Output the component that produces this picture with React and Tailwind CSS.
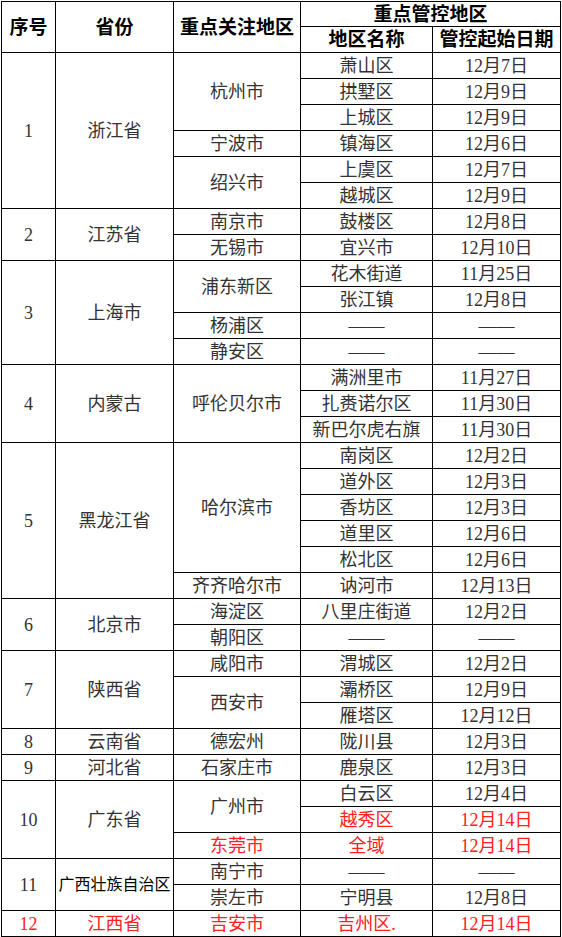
import React from "react";

const font = { fontFamily: '"Liberation Serif", "Noto Sans CJK SC", serif' };

const rows = [
  // [no, province, provSpan, city, citySpan, area, date, redArea, redCity]
  { no: "1", prov: "浙江省", ps: 6, city: "杭州市", cs: 3, area: "萧山区", date: "12月7日" },
  { area: "拱墅区", date: "12月9日" },
  { area: "上城区", date: "12月9日" },
  { city: "宁波市", cs: 1, area: "镇海区", date: "12月6日" },
  { city: "绍兴市", cs: 2, area: "上虞区", date: "12月7日" },
  { area: "越城区", date: "12月9日" },
  { no: "2", prov: "江苏省", ps: 2, city: "南京市", cs: 1, area: "鼓楼区", date: "12月8日" },
  { city: "无锡市", cs: 1, area: "宜兴市", date: "12月10日" },
  { no: "3", prov: "上海市", ps: 4, city: "浦东新区", cs: 2, area: "花木街道", date: "11月25日" },
  { area: "张江镇", date: "12月8日" },
  { city: "杨浦区", cs: 1, area: "——", date: "——" },
  { city: "静安区", cs: 1, area: "——", date: "——" },
  { no: "4", prov: "内蒙古", ps: 3, city: "呼伦贝尔市", cs: 3, area: "满洲里市", date: "11月27日" },
  { area: "扎赉诺尔区", date: "11月30日" },
  { area: "新巴尔虎右旗", date: "11月30日" },
  { no: "5", prov: "黑龙江省", ps: 6, city: "哈尔滨市", cs: 5, area: "南岗区", date: "12月2日" },
  { area: "道外区", date: "12月3日" },
  { area: "香坊区", date: "12月3日" },
  { area: "道里区", date: "12月6日" },
  { area: "松北区", date: "12月6日" },
  { city: "齐齐哈尔市", cs: 1, area: "讷河市", date: "12月13日" },
  { no: "6", prov: "北京市", ps: 2, city: "海淀区", cs: 1, area: "八里庄街道", date: "12月2日" },
  { city: "朝阳区", cs: 1, area: "——", date: "——" },
  { no: "7", prov: "陕西省", ps: 3, city: "咸阳市", cs: 1, area: "渭城区", date: "12月2日" },
  { city: "西安市", cs: 2, area: "灞桥区", date: "12月9日" },
  { area: "雁塔区", date: "12月12日" },
  { no: "8", prov: "云南省", ps: 1, city: "德宏州", cs: 1, area: "陇川县", date: "12月3日" },
  { no: "9", prov: "河北省", ps: 1, city: "石家庄市", cs: 1, area: "鹿泉区", date: "12月3日" },
  { no: "10", prov: "广东省", ps: 3, city: "广州市", cs: 2, area: "白云区", date: "12月4日" },
  { area: "越秀区", date: "12月14日", red: true },
  { city: "东莞市", cs: 1, area: "全域", date: "12月14日", red: true, redCity: true },
  { no: "11", prov: "广西壮族自治区", ps: 2, small: true, city: "南宁市", cs: 1, area: "——", date: "——" },
  { city: "崇左市", cs: 1, area: "宁明县", date: "12月8日" },
  { no: "12", prov: "江西省", ps: 1, city: "吉安市", cs: 1, area: "吉州区.", date: "12月14日", red: true, redCity: true, redAll: true },
];

const spanClass = {
  1: "row-span-1",
  2: "row-span-2",
  3: "row-span-3",
  4: "row-span-4",
  5: "row-span-5",
  6: "row-span-6",
};

const Cell = ({ children, className = "" }) => (
  <div
    className={`flex items-center justify-center border-r border-b border-black leading-none whitespace-nowrap ${className}`}
  >
    {children}
  </div>
);

const App = () => {
  const body = "text-[18px] text-[#333]";
  const red = "text-[18px] text-[#ff2020]";
  const head = "text-[19px] font-bold text-black";
  return (
    <div className="bg-white w-[562px] h-[937px] pl-px pt-px" style={font}>
      <div className="grid grid-cols-[54px_118px_127px_132px_128px] grid-rows-[25px_26px_repeat(34,26px)] border-l border-t border-black w-fit">
        <Cell className={`row-span-2 ${head}`}>序号</Cell>
        <Cell className={`row-span-2 ${head}`}>省份</Cell>
        <Cell className={`row-span-2 ${head}`}>重点关注地区</Cell>
        <Cell className={`col-span-2 ${head}`}>重点管控地区</Cell>
        <Cell className={head}>地区名称</Cell>
        <Cell className={head}>管控起始日期</Cell>
        {rows.map((r, i) => (
          <React.Fragment key={i}>
            {r.no && (
              <Cell className={`${spanClass[r.ps]} ${r.redAll ? red : body}`}>
                {r.no}
              </Cell>
            )}
            {r.prov && (
              <Cell
                className={`${spanClass[r.ps]} ${r.redAll ? red : body} ${
                  r.small ? "!text-[16px] !text-black" : ""
                }`}
              >
                {r.prov}
              </Cell>
            )}
            {r.city && (
              <Cell className={`${spanClass[r.cs]} ${r.redCity ? red : body}`}>
                {r.city}
              </Cell>
            )}
            <Cell className={r.red ? red : body}>{r.area}</Cell>
            <Cell className={r.red ? red : body}>{r.date}</Cell>
          </React.Fragment>
        ))}
      </div>
    </div>
  );
};

export default App;
